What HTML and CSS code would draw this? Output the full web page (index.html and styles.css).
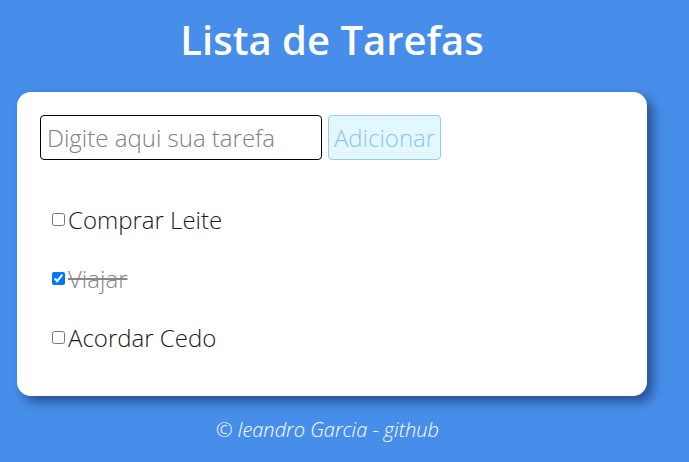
FILE: index.html
```html
<!DOCTYPE html>
<html lang="pt-BR">
<head>
<meta charset="utf-8">
<title>Lista de Tarefas</title>
<link rel="stylesheet" href="styles.css">
</head>
<body>
<div class="page">
  <h1 class="title">Lista de Tarefas</h1>
  <div class="card">
    <form class="add-form">
      <input class="task-input" type="text" placeholder="Digite aqui sua tarefa">
      <button class="add-btn" type="button" disabled>Adicionar</button>
    </form>
    <ul class="tasks">
      <li class="task"><input type="checkbox" class="check"><span class="label">Comprar Leite</span></li>
      <li class="task done"><input type="checkbox" class="check" checked><span class="label">Viajar</span></li>
      <li class="task"><input type="checkbox" class="check"><span class="label">Acordar Cedo</span></li>
    </ul>
  </div>
  <footer class="footer">© leandro Garcia - github</footer>
</div>
</body>
</html>
```
FILE: styles.css
```css
html, body {
  margin: 0;
  padding: 0;
}
body {
  background: #478eea;
  font-family: "Open Sans", sans-serif;
  height: 462px;
  overflow: hidden;
}
.page {
  width: 630px;
  margin-left: 17px;
  display: flex;
  flex-direction: column;
  align-items: stretch;
}
.title {
  margin: 12px 0 0 0;
  height: 80px;
  text-align: center;
  color: #fff;
  font-size: 40px;
  font-weight: 600;
  line-height: 56px;
}
.card {
  background: #fff;
  border-radius: 14px;
  box-shadow: 6px 6px 11px rgba(20, 40, 90, 0.6);
  padding: 23px 23px 22px 23px;
  height: 304px;
  box-sizing: border-box;
}
.add-form {
  display: flex;
  gap: 6px;
  margin: 0;
}
.task-input {
  width: 282px;
  height: 45px;
  box-sizing: border-box;
  border: 1px solid #000;
  border-radius: 4px;
  padding: 0 6px;
  font-family: "Open Sans", sans-serif;
  font-weight: 300;
  font-size: 24px;
  color: #333;
}
.task-input::placeholder {
  color: #808080;
}
.add-btn {
  width: 113px;
  height: 45px;
  box-sizing: border-box;
  border: 1px solid #8fd0f0;
  border-radius: 4px;
  background: #e3f7ff;
  color: #8cc6f2;
  font-family: "Open Sans", sans-serif;
  font-weight: 300;
  font-size: 24px;
  padding: 0;
}
.tasks {
  list-style: none;
  margin: 44px 0 0 0;
  padding: 0 0 0 8px;
  display: flex;
  flex-direction: column;
  gap: 29px;
}
.task {
  display: flex;
  align-items: center;
  height: 30px;
  font-size: 24px;
  font-weight: 300;
  color: #1a1a1a;
}
.check {
  margin: 0 3px 0 4px;
  width: 13px;
  height: 13px;
}
.done .label {
  color: #888;
  text-decoration: line-through;
}
.footer {
  margin-top: 20px;
  padding-right: 9px;
  text-align: center;
  color: #fff;
  font-style: italic;
  font-weight: 300;
  font-size: 20px;
}
```
